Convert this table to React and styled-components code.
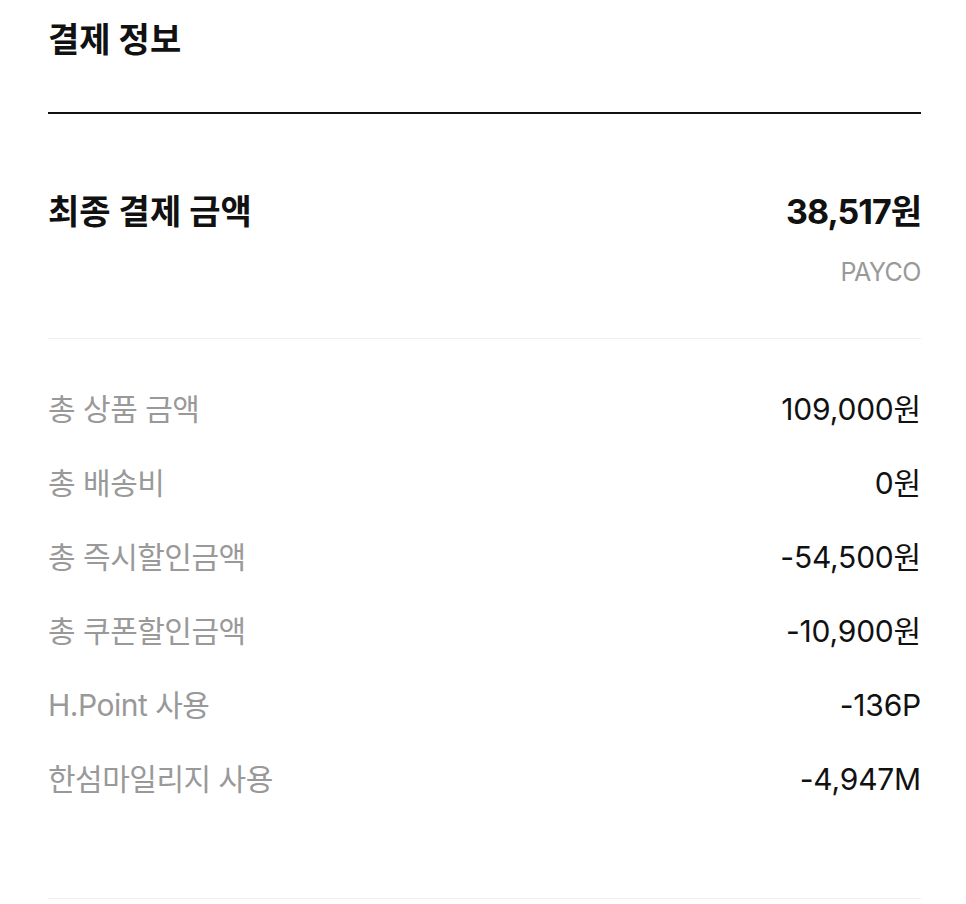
import styled, { createGlobalStyle } from 'styled-components';

const GlobalStyle = createGlobalStyle`
  body {
    margin: 0;
    background-color: #fff;
    font-family: Inter, "Noto Sans CJK KR", sans-serif;
    color: #111;
  }
`;

const PaymentContainer = styled.main`
  padding: 0 45px 0 48px;
`;

const PaymentHeader = styled.header`
  padding: 20px 0 52px;
  border-bottom: 2px solid #111;

  & h2 {
    margin: 0;
    font-size: 34px;
    line-height: 40px;
    font-weight: 700;
    letter-spacing: 0;
  }
`;

const PaymentTotal = styled.section`
  padding: 78px 0 50px;
  border-bottom: 1px solid #eeeeee;
`;

const TotalRow = styled.div`
  align-items: center;
  display: flex;
  justify-content: space-between;
  font-size: 34px;
  line-height: 40px;
  font-weight: 700;

  & span:first-child {
    letter-spacing: 0;
  }
  & span:last-child {
    letter-spacing: -1px;
  }
`;

const PaymentMethod = styled.p`
  margin: 24px 0 0;
  color: #999;
  font-size: 25px;
  line-height: 32px;
  text-align: right;
  letter-spacing: -0.5px;
`;

const PaymentList = styled.ul`
  list-style: none;
  margin: 0;
  padding: 33px 0 82px;
  border-bottom: 1px solid #eeeeee;
`;

const PaymentItem = styled.li`
  align-items: center;
  display: flex;
  justify-content: space-between;
  padding: 17px 0;
  font-size: 30px;
  line-height: 40px;

  & span:first-child {
    color: #999;
    letter-spacing: -0.5px;
  }
  & span:last-child {
    color: #111;
    letter-spacing: -0.2px;
  }
`;

const items = [
  ['총 상품 금액', '109,000원'],
  ['총 배송비', '0원'],
  ['총 즉시할인금액', '-54,500원'],
  ['총 쿠폰할인금액', '-10,900원'],
  ['H.Point 사용', '-136P'],
  ['한섬마일리지 사용', '-4,947M'],
];

const App = () => {
  return (
    <PaymentContainer>
      <GlobalStyle />
      <PaymentHeader>
        <h2>결제 정보</h2>
      </PaymentHeader>

      <PaymentTotal>
        <TotalRow>
          <span>최종 결제 금액</span>
          <span>38,517원</span>
        </TotalRow>
        <PaymentMethod>PAYCO</PaymentMethod>
      </PaymentTotal>

      <PaymentList>
        {items.map(([label, value]) => (
          <PaymentItem key={label}>
            <span>{label}</span>
            <span>{value}</span>
          </PaymentItem>
        ))}
      </PaymentList>
    </PaymentContainer>
  );
};

export default App;
